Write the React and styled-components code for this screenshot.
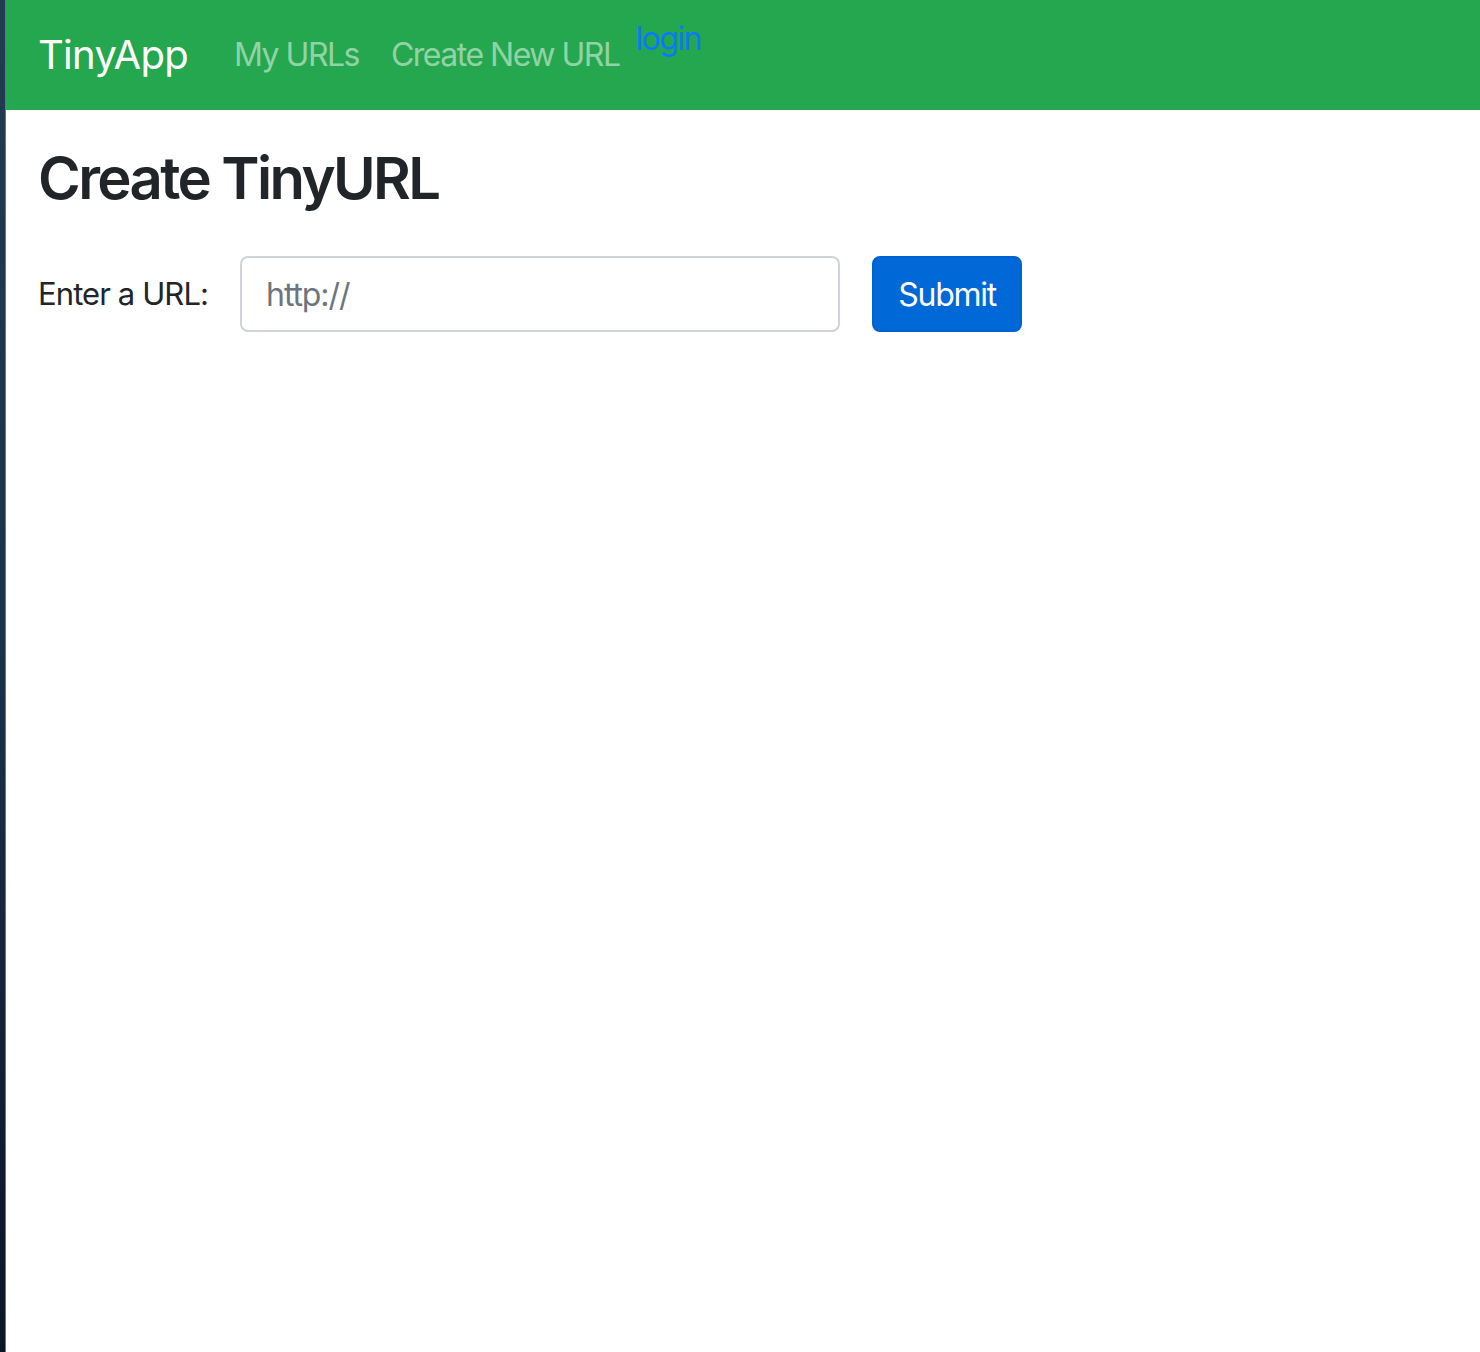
import React from 'react';
import styled, { createGlobalStyle } from 'styled-components';

const GlobalStyle = createGlobalStyle`
  html, body {
    margin: 0;
    padding: 0;
  }
  body {
    font-family: Inter, "Noto Sans", "Liberation Sans", sans-serif;
    color: #212529;
    background: #fff;
  }
  * {
    box-sizing: border-box;
  }
`;

const Screen = styled.div`
  display: flex;
  min-height: 1352px;
`;

// bit of desktop showing at the left edge of the window
const DesktopEdge = styled.div`
  width: 6px;
  flex-shrink: 0;
  background: linear-gradient(180deg, #243a55 0%, #1b3049 50%, #0b1526 100%);
  border-right: 1px solid #6b7480;
`;

const Window = styled.div`
  flex: 1;
  display: flex;
  flex-direction: column;
  background: #fff;
`;

const Navbar = styled.nav`
  display: flex;
  align-items: center;
  height: 110px;
  padding: 16px 32px;
  background-color: #24a74f;
`;

const Brand = styled.a`
  font-size: 40px;
  line-height: 60px;
  color: #fff;
  text-decoration: none;
  margin-right: 30px;
  letter-spacing: -0.7px;
`;

const NavList = styled.ul`
  display: flex;
  align-self: stretch;
  align-items: center;
  list-style: none;
  margin: 0;
  padding: 0;
`;

const NavLink = styled.a`
  display: block;
  padding: 16px 16px;
  font-size: 32px;
  line-height: 48px;
  color: rgba(255, 255, 255, 0.5);
  text-decoration: none;
  letter-spacing: -1.5px;
`;

const LoginLink = styled.a`
  align-self: flex-start;
  margin-top: -1px;
  font-size: 32px;
  line-height: 48px;
  color: #0a78ff;
  text-decoration: none;
  letter-spacing: -1.6px;
`;

const Content = styled.main`
  padding: 0 32px;
`;

const Title = styled.h1`
  margin: 32px 0 42px;
  font-size: 58px;
  line-height: 72px;
  font-weight: 600;
  letter-spacing: -2.6px;
`;

const Form = styled.form`
  display: flex;
  align-items: center;
  gap: 32px;
`;

const Label = styled.label`
  font-size: 31px;
  line-height: 48px;
  letter-spacing: -0.9px;
`;

const UrlInput = styled.input`
  width: 600px;
  height: 76px;
  padding: 12px 24px;
  font-family: inherit;
  font-size: 32px;
  color: #495057;
  border: 2px solid #ced4da;
  border-radius: 8px;
  outline: none;
  letter-spacing: -1.1px;

  &::placeholder {
    color: #6c757d;
  }
`;

const SubmitButton = styled.button`
  width: 150px;
  height: 76px;
  padding: 12px 0;
  font-family: inherit;
  font-size: 32px;
  color: #fff;
  background-color: #0068d7;
  border: 2px solid #0062cc;
  border-radius: 8px;
  letter-spacing: -1.3px;
  cursor: pointer;
`;

export default function App() {
  return (
    <>
      <GlobalStyle />
      <Screen>
        <DesktopEdge />
        <Window>
          <Navbar>
            <Brand href="#">TinyApp</Brand>
            <NavList>
              <li>
                <NavLink href="#">My URLs</NavLink>
              </li>
              <li>
                <NavLink href="#">Create New URL</NavLink>
              </li>
            </NavList>
            <LoginLink href="#">login</LoginLink>
          </Navbar>
          <Content>
            <Title>Create TinyURL</Title>
            <Form onSubmit={e => e.preventDefault()}>
              <Label htmlFor="longURL">Enter a URL:</Label>
              <UrlInput id="longURL" type="text" placeholder="http://" />
              <SubmitButton type="submit">Submit</SubmitButton>
            </Form>
          </Content>
        </Window>
      </Screen>
    </>
  );
}
